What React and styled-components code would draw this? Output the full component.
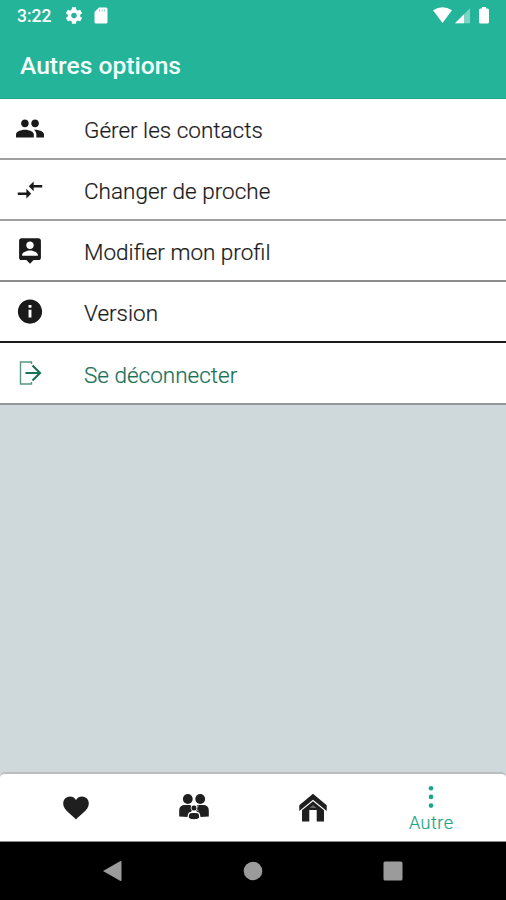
import React from "react";
import styled, { createGlobalStyle } from "styled-components";

const GlobalStyle = createGlobalStyle`
  *, *::before, *::after { box-sizing: border-box; }
  body { margin: 0; font-family: Roboto, sans-serif; background: #cfd8db; }
`;

const Screen = styled.div`
  display: flex;
  flex-direction: column;
  width: 506px;
  height: 900px;
  overflow: hidden;
  background: #cfd8db;
`;

const Header = styled.header`
  flex: none;
  height: 99px;
  background: #23b49a;
  border-bottom: 1px solid #26a78f;
  color: #fff;
`;

const StatusBar = styled.div`
  display: flex;
  justify-content: space-between;
  height: 32px;
  padding: 0 12px 0 17px;
`;

const StatusGroup = styled.div`
  display: flex;
  align-items: center;
`;

const Clock = styled.span`
  width: 48px;
  font-size: 17.5px;
  font-weight: 500;
  line-height: 32px;
`;

const Title = styled.h1`
  margin: 0;
  padding-left: 20px;
  font-size: 24.6px;
  font-weight: 500;
  line-height: 68px;
  color: #f4fffc;
`;

const Icon = styled.svg`
  display: block;
  flex: none;
  width: ${(p) => p.$w}px;
  height: ${(p) => p.$h}px;
  fill: currentColor;
`;

const Menu = styled.nav`
  flex: 1;
`;

const MenuRow = styled.div`
  display: flex;
  align-items: center;
  height: ${(p) => p.$height}px;
  padding-left: 14px;
  background: #fff;
  color: ${(p) => (p.$accent ? "#1c7257" : "#1a1a1a")};
  border-bottom: 2px solid ${(p) => p.$line};
`;

const RowLabel = styled.span`
  margin-left: 38px;
  padding-top: 3px;
  font-size: 22.5px;
  font-weight: 300;
  line-height: 28px;
  -webkit-text-stroke: 0.2px currentColor;
`;

const TabBar = styled.div`
  flex: none;
  display: grid;
  grid-template-columns: repeat(4, 118.5px);
  justify-content: center;
  height: 70px;
  padding-left: 1px;
  background: #fff;
  border-top: 2px solid #bcbdc1;
  border-bottom: 1px solid #8c8889;
  border-radius: 5px 5px 0 0;
`;

const Tab = styled.div`
  display: flex;
  flex-direction: column;
  align-items: center;
  padding-top: ${(p) => (p.$active ? 10 : 18)}px;
  color: ${(p) => (p.$active ? "#1aa686" : "#1f1f1f")};
`;

const TabLabel = styled.span`
  margin-top: 2px;
  font-size: 18px;
  font-weight: 300;
  letter-spacing: 0.5px;
  line-height: 22px;
  -webkit-text-stroke: 0.2px currentColor;
`;

const SystemNav = styled.div`
  flex: none;
  display: grid;
  grid-template-columns: repeat(3, 140px);
  justify-content: center;
  justify-items: center;
  height: 58px;
  padding-top: 18px;
  background: #000;
  color: #9b9b9b;
`;

const PeopleIcon = () => (
  <Icon $w={32} $h={32} viewBox="-0.6 -0.2 25.2 25.2">
    <path d="M16 11c1.66 0 2.99-1.34 2.99-3S17.66 5 16 5c-1.66 0-3 1.34-3 3s1.34 3 3 3zm-8 0c1.66 0 2.99-1.34 2.99-3S9.66 5 8 5C6.34 5 5 6.34 5 8s1.34 3 3 3zm0 2c-2.33 0-7 1.17-7 3.5V19h14v-2.5c0-2.33-4.67-3.5-7-3.5zm8 0c-.29 0-.62.02-.97.05 1.16.84 1.97 1.97 1.97 3.45V19h6v-2.5c0-2.33-4.67-3.5-7-3.5z" />
  </Icon>
);

const SwapIcon = () => (
  <Icon $w={32} $h={32} viewBox="-1.1 -1.1 26.2 26.2">
    <path d="M9.010 14H2v2h7.010v3L13 15l-3.990-4v3zm5.980-1v-3H22V8h-7.010V5L11 9l3.990 4z" />
  </Icon>
);

const ProfileIcon = () => (
  <Icon $w={32} $h={32} viewBox="-1.2 -0.7 26.4 26.4">
    <path d="M19 2H5c-1.100 0-2 .9-2 2v14c0 1.100.9 2 2 2h4l3 3 3-3h4c1.100 0 2-.9 2-2V4c0-1.100-.9-2-2-2zm-7 2.600c1.700 0 3.100 1.400 3.100 3.100s-1.400 3.100-3.100 3.100-3.100-1.400-3.100-3.100 1.400-3.100 3.100-3.100zM18.500 16.500H5.500v-.9c0-2.300 4.300-3.600 6.500-3.600s6.500 1.300 6.500 3.600v.9z" />
  </Icon>
);

const InfoIcon = () => (
  <Icon $w={32} $h={32} viewBox="-1.2 -0.8 26.4 26.4">
    <path d="M12 2C6.480 2 2 6.480 2 12s4.480 10 10 10 10-4.480 10-10S17.520 2 12 2zm1.200 15h-2.400v-6.400h2.400V17zm0-8.200h-2.400V6.600h2.400v2.200z" />
  </Icon>
);

const LogoutIcon = () => (
  <Icon $w={32} $h={32} viewBox="0 0 32 32">
    <path d="M17.500 7V5H6.500V27H17.500V25" fill="none" stroke="currentColor" strokeWidth="1.400" opacity=".75" />
    <path d="M11.500 16H26M18.500 8.500 26 16 18.500 23.500" fill="none" stroke="currentColor" strokeWidth="2.200" />
  </Icon>
);

const HeartIcon = () => (
  <Icon $w={32} $h={32} viewBox="0 0 32 32">
    <path d="M16 27.500C14 25 7.500 20.500 4.800 16.500 2.600 13 2.800 9.500 4.600 7 7.500 3.500 13.500 3.600 16 8 18.500 3.600 24.500 3.500 27.400 7 29.200 9.500 29.400 13 27.200 16.500 24.500 20.500 18 25 16 27.500Z" />
  </Icon>
);

const FamilyIcon = () => (
  <Icon $w={32} $h={32} viewBox="0 0 32 32">
    <circle cx="9.800" cy="7" r="4.900" />
    <circle cx="22.200" cy="7" r="4.900" />
    <path d="M1.200 24.500V18.500Q1.200 13 7 13H12.500L14.500 18 12 21 9.500 25Z" />
    <path d="M30.800 24.500V18.500Q30.800 13 25 13H19.500L17.500 18 20 21 22.500 25Z" />
    <circle cx="16" cy="16" r="3" stroke="#fff" strokeWidth=".8" />
    <path d="M10.300 26.200V24Q10.300 20.300 14 20.300H18Q21.700 20.300 21.700 24V26.200Q16 29.500 10.300 26.200Z" stroke="#fff" strokeWidth="1.200" />
    <path d="M18.500 15.500 20.500 14M18.500 17.500 20.500 19" stroke="#fff" strokeWidth=".8" />
  </Icon>
);

const HomeIcon = () => (
  <Icon $w={32} $h={32} viewBox="0 0 32 32">
    <path d="M16 1.800 29.700 13.300V19L16 7.800 2.300 19V13.300Z" />
    <path d="M5 18.200 16 9.300 27 18.200V29.500H19.700V18H12.300V29.500H5Z" />
    <path d="M12.600 16.100 16 13 19.400 16.100Z" fill="#666" />
  </Icon>
);

const MoreIcon = () => (
  <Icon $w={8} $h={26} viewBox="0 0 8 26">
    <circle cx="4" cy="4.200" r="2.300" />
    <circle cx="4" cy="12.900" r="2.300" />
    <circle cx="4" cy="21.600" r="2.300" />
  </Icon>
);

const GearIcon = () => (
  <Icon $w={18} $h={18} viewBox="1.500 2 21 21">
    <path d="M19.140 12.940c.04-.3.06-.61.06-.94 0-.32-.02-.64-.07-.94l2.030-1.580c.18-.14.23-.41.12-.61l-1.920-3.320c-.12-.22-.37-.29-.59-.22l-2.390.96c-.5-.38-1.030-.7-1.620-.94l-.36-2.540c-.04-.24-.24-.41-.48-.41h-3.840c-.24 0-.43.17-.47.41l-.36 2.540c-.59.24-1.130.57-1.620.94l-2.390-.96c-.22-.08-.47 0-.59.22L2.740 8.870c-.12.21-.08.47.12.61l2.030 1.580c-.05.3-.09.63-.09.94s.02.64.07.94l-2.030 1.580c-.18.14-.23.41-.12.61l1.920 3.320c.12.22.37.29.59.22l2.390-.96c.5.38 1.030.7 1.620.94l.36 2.540c.05.24.24.41.48.41h3.840c.24 0 .44-.17.47-.41l.36-2.540c.59-.24 1.130-.56 1.620-.94l2.390.96c.22.08.47 0 .59-.22l1.920-3.320c.12-.22.07-.47-.12-.61l-2.010-1.580zM12 15.300c-1.820 0-3.300-1.480-3.300-3.300s1.480-3.300 3.300-3.300 3.300 1.480 3.300 3.300-1.480 3.300-3.300 3.300z" />
  </Icon>
);

const CardIcon = () => (
  <Icon $w={34} $h={20} viewBox="0 0 34 20">
    <path d="M16 1.500H23Q24.500 1.500 24.500 3V16Q24.500 17.500 23 17.500H13Q11.500 17.500 11.500 16V6Z" />
    <path d="M16.500 3.500v2M19 3.500v2M21.500 3.500v2" stroke="#7fd3c3" />
  </Icon>
);

const SignalIcons = () => (
  <Icon $w={62} $h={20} viewBox="-0.500 0 62 20">
    <path d="M0.500 4.300Q10-2 19.500 4.300L10 17Z" />
    <path d="M22.500 17.300 37.500 2.300V17.300Z" opacity=".42" />
    <path d="M22.500 17.300 31.500 8.300V17.300Z" />
    <path d="M49.500 1H53.500V2.500H55Q56.500 2.500 56.500 4V16Q56.500 17.500 55 17.500H48Q46.500 17.500 46.500 16V4Q46.500 2.500 48 2.500H49.500Z" />
  </Icon>
);

const MENU = [
  { label: "Gérer les contacts", icon: <PeopleIcon />, height: 61, line: "#a0a0a0" },
  { label: "Changer de proche", icon: <SwapIcon />, height: 61, line: "#a0a0a0" },
  { label: "Modifier mon profil", icon: <ProfileIcon />, height: 61, line: "#8c8c8c" },
  { label: "Version", icon: <InfoIcon />, height: 61, line: "#1a1a1a" },
  { label: "Se déconnecter", icon: <LogoutIcon />, height: 62, line: "#92999b", accent: true },
];

export default function App() {
  return (
    <Screen>
      <GlobalStyle />
      <Header>
        <StatusBar>
          <StatusGroup>
            <Clock>3:22</Clock>
            <GearIcon />
            <CardIcon />
          </StatusGroup>
          <StatusGroup>
            <SignalIcons />
          </StatusGroup>
        </StatusBar>
        <Title>Autres options</Title>
      </Header>
      <Menu>
        {MENU.map((item) => (
          <MenuRow key={item.label} $height={item.height} $line={item.line} $accent={item.accent}>
            {item.icon}
            <RowLabel>{item.label}</RowLabel>
          </MenuRow>
        ))}
      </Menu>
      <TabBar>
        <Tab><HeartIcon /></Tab>
        <Tab><FamilyIcon /></Tab>
        <Tab><HomeIcon /></Tab>
        <Tab $active>
          <MoreIcon />
          <TabLabel>Autre</TabLabel>
        </Tab>
      </TabBar>
      <SystemNav>
        <Icon $w={22} $h={22} viewBox="0 0 22 22">
          <path d="M1 11 18.500 1Q19.500.6 19.500 2V20Q19.500 21.400 18.500 21Z" />
        </Icon>
        <Icon $w={22} $h={22} viewBox="0 0 22 22">
          <circle cx="11" cy="11" r="9.300" />
        </Icon>
        <Icon $w={22} $h={22} viewBox="0 0 22 22">
          <rect x="1.500" y="1.500" width="19" height="19" rx="1.500" />
        </Icon>
      </SystemNav>
    </Screen>
  );
}
